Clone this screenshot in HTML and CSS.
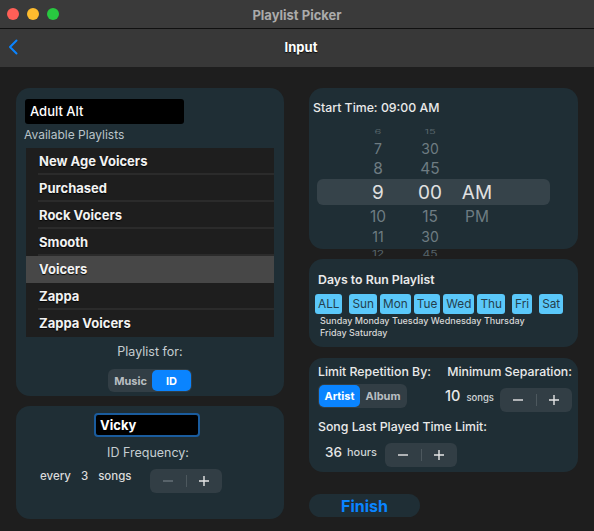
FILE: index.html
```html
<!DOCTYPE html>
<html>
<head>
<meta charset="utf-8">
<link rel="stylesheet" href="styles.css">
</head>
<body>
<div class="window">
  <header class="titlebar">
    <div class="lights">
      <span class="light red"></span><span class="light yellow"></span><span class="light green"></span>
    </div>
    <div class="win-title">Playlist Picker</div>
    <div></div>
  </header>
  <nav class="navbar">
    <svg class="back" width="12" height="16" viewBox="0 0 12 16"><path d="M8.5 1.5 L2 8 L8.5 14.5" fill="none" stroke="#0a84ff" stroke-width="2" stroke-linecap="round" stroke-linejoin="round"/></svg>
    <div class="nav-title">Input</div>
    <div></div>
  </nav>
  <main class="content">
    <div class="col">
      <section class="panel playlists">
        <div class="text-field">Adult Alt</div>
        <div class="muted-label">Available Playlists</div>
        <div class="list">
          <div class="list-row"><span>New Age Voicers</span></div>
          <div class="list-row"><span>Purchased</span></div>
          <div class="list-row"><span>Rock Voicers</span></div>
          <div class="list-row"><span>Smooth</span></div>
          <div class="list-row selected"><span>Voicers</span></div>
          <div class="list-row"><span>Zappa</span></div>
          <div class="list-row last"><span>Zappa Voicers</span></div>
        </div>
        <div class="center-label">Playlist for:</div>
        <div class="segmented seg-for">
          <span class="seg-item seg-music">Music</span>
          <span class="seg-item seg-id active">ID</span>
        </div>
      </section>
      <section class="panel id-panel">
        <div class="text-field focused">Vicky</div>
        <div class="center-label freq-label">ID Frequency:</div>
        <div class="freq-row">
          <span class="freq-text">every</span>
          <span class="freq-num">3</span>
          <span class="freq-text">songs</span>
          <div class="stepper freq-stepper">
            <span class="step-btn disabled"><svg width="12" height="12" viewBox="0 0 12 12"><path d="M1 6 H11" stroke="currentColor" stroke-width="1.4"/></svg></span>
            <span class="step-div"></span>
            <span class="step-btn"><svg width="12" height="12" viewBox="0 0 12 12"><path d="M1 6 H11 M6 1 V11" stroke="currentColor" stroke-width="1.4"/></svg></span>
          </div>
        </div>
      </section>
    </div>
    <div class="col">
      <section class="panel time-panel">
        <div class="panel-title time-title">Start Time: 09:00 AM</div>
        <div class="picker">
          <div class="p-row r-far"><span>6</span><span>15</span><span></span></div>
          <div class="p-row r-mid"><span>7</span><span>30</span><span></span></div>
          <div class="p-row r-near"><span>8</span><span>45</span><span></span></div>
          <div class="p-row r-sel"><span>9</span><span>00</span><span>AM</span></div>
          <div class="p-row r-near"><span>10</span><span>15</span><span>PM</span></div>
          <div class="p-row r-mid"><span>11</span><span>30</span><span></span></div>
          <div class="p-row r-end"><span>12</span><span>45</span><span></span></div>
        </div>
      </section>
      <section class="panel days-panel">
        <div class="panel-title days-title">Days to Run Playlist</div>
        <div class="day-buttons">
          <span class="day">ALL</span>
          <span class="day gap-l">Sun</span>
          <span class="day">Mon</span>
          <span class="day">Tue</span>
          <span class="day">Wed</span>
          <span class="day">Thu</span>
          <span class="day gap-l">Fri</span>
          <span class="day gap-l">Sat</span>
        </div>
        <div class="day-names">Sunday Monday Tuesday Wednesday Thursday<br>Friday Saturday</div>
      </section>
      <section class="panel limit-panel">
        <div class="limit-row head-row">
          <span class="panel-title">Limit Repetition By:</span>
          <span class="panel-title">Minimum Separation:</span>
        </div>
        <div class="limit-row ctrl-row">
          <div class="segmented seg-limit">
            <span class="seg-item seg-artist active">Artist</span>
            <span class="seg-item seg-album">Album</span>
          </div>
          <span class="num sep-num">10</span>
          <span class="unit">songs</span>
          <div class="stepper sep-stepper">
            <span class="step-btn"><svg width="12" height="12" viewBox="0 0 12 12"><path d="M1 6 H11" stroke="currentColor" stroke-width="1.4"/></svg></span>
            <span class="step-div"></span>
            <span class="step-btn"><svg width="12" height="12" viewBox="0 0 12 12"><path d="M1 6 H11 M6 1 V11" stroke="currentColor" stroke-width="1.4"/></svg></span>
          </div>
        </div>
        <div class="panel-title last-title">Song Last Played Time Limit:</div>
        <div class="limit-row hours-row">
          <span class="num">36</span>
          <span class="unit hours">hours</span>
          <div class="stepper">
            <span class="step-btn"><svg width="12" height="12" viewBox="0 0 12 12"><path d="M1 6 H11" stroke="currentColor" stroke-width="1.4"/></svg></span>
            <span class="step-div"></span>
            <span class="step-btn"><svg width="12" height="12" viewBox="0 0 12 12"><path d="M1 6 H11 M6 1 V11" stroke="currentColor" stroke-width="1.4"/></svg></span>
          </div>
        </div>
      </section>
      <button class="finish">Finish</button>
    </div>
  </main>
</div>
</body>
</html>
```
FILE: styles.css
```css
* { box-sizing: border-box; }
html, body {
  margin: 0;
  padding: 0;
}
body {
  width: 594px;
  height: 531px;
  overflow: hidden;
  background: #1e1e1e;
  font-family: Inter, "Noto Sans", sans-serif;
  color: #e8e8e8;
}
.window {
  width: 594px;
  height: 531px;
  background: #1e1e1e;
}
.titlebar {
  height: 29px;
  background: #3a3a3a;
  border-bottom: 1px solid #101010;
  display: grid;
  grid-template-columns: 1fr auto 1fr;
  align-items: center;
  padding: 0 7px;
}
.lights { display: flex; gap: 8px; }
.light { width: 12px; height: 12px; border-radius: 50%; }
.red { background: #ff5f57; }
.yellow { background: #febc2e; }
.green { background: #28c840; }
.win-title {
  font-size: 13px;
  font-weight: 700;
  color: #ababab;
  padding-top: 1px;
}
.navbar {
  height: 38px;
  background: #383838;
  display: grid;
  grid-template-columns: 1fr auto 1fr;
  align-items: center;
  padding: 0 0 2px 8px;
}
.back { display: block; }
.nav-title {
  font-size: 13px;
  font-weight: 700;
  color: #ffffff;
  text-shadow: 0 1px 1px rgba(0,0,0,0.8);
}
.content {
  display: flex;
  gap: 25px;
  padding: 21px 16px 0 16px;
}
.col {
  display: flex;
  flex-direction: column;
  gap: 10px;
}
.col:first-child { width: 268px; }
.col:last-child { width: 269px; }
.panel {
  background: #1f2e35;
  border-radius: 14px;
}
/* playlists panel */
.playlists {
  height: 308px;
  padding: 11px 10px 0 10px;
}
.text-field {
  width: 159px;
  height: 25px;
  background: #000;
  border-radius: 3px;
  font-size: 13px;
  font-weight: 500;
  line-height: 25px;
  padding-left: 5px;
  color: #fff;
  margin-left: -1px;
}
.muted-label {
  font-size: 12px;
  line-height: 16px;
  margin-top: 3px;
  margin-left: -2px;
  color: #bac4c9;
}
.list {
  margin-top: 5px;
  height: 189px;
  background: #1e1e1e;
}
.list-row {
  height: 27px;
  padding-left: 12px;
}
.list-row span {
  display: block;
  height: 27px;
  line-height: 26px;
  border-bottom: 2px solid #2b2b2b;
  font-size: 13px;
  font-weight: 700;
  color: #f2f2f2;
  padding-left: 1px;
  text-shadow: 0 1px 1px rgba(0,0,0,0.9);
}
.list-row.selected { background: #474747; }
.list-row.selected span, .list-row.last span { border-bottom-color: transparent; }
.center-label {
  text-align: center;
  font-size: 12.5px;
  line-height: 16px;
  margin-top: 7px;
  color: #c5cdd1;
}
.segmented {
  display: flex;
  background: #323e45;
  border-radius: 6px;
  padding: 1px;
  font-size: 11px;
  font-weight: 700;
}
.seg-item {
  display: flex;
  align-items: center;
  justify-content: center;
  border-radius: 5px;
  color: #b9bfc2;
}
.seg-item.active { background: #0a84ff; color: #fff; }
.seg-for {
  width: 84px;
  height: 23px;
  margin: 9px auto 0;
}
.seg-music { width: 43px; }
.seg-id { width: 39px; }
/* id panel */
.id-panel {
  height: 113px;
  padding-top: 7px;
}
.text-field.focused {
  width: 106px;
  height: 24px;
  margin: 0 auto;
  position: relative;
  left: -3px;
  border: 2px solid #1a5c9e;
  border-radius: 4px;
  line-height: 20px;
  padding-left: 4px;
  font-weight: 700;
}
.freq-label { margin-top: 8px; margin-right: 4px; }
.freq-row {
  display: flex;
  align-items: flex-start;
  padding: 0 62px 0 24px;
  margin-top: 8px;
  height: 24px;
}
.freq-text, .freq-num {
  font-size: 11.5px;
  font-weight: 500;
  color: #dadada;
  line-height: 14px;
}
.freq-num { margin: 0 10px 0 10px; }
.freq-stepper { margin-left: auto; }
.stepper {
  display: flex;
  align-items: center;
  width: 72px;
  height: 24px;
  background: #323e45;
  border-radius: 6px;
  flex: none;
}
.step-btn {
  flex: 1;
  display: flex;
  align-items: center;
  justify-content: center;
  color: #e6e6e6;
}
.step-btn.disabled { color: #69747a; }
.step-btn svg { display: block; }
.step-div {
  width: 1px;
  height: 12px;
  background: #4d585e;
}
/* time panel */
.time-panel {
  height: 161px;
  padding: 12px 0 0 4px;
}
.panel-title {
  font-size: 12.3px;
  font-weight: 500;
  line-height: 15px;
  color: #eaeaea;
}
.picker {
  margin-top: 9px;
  width: 233px;
  height: 132px;
  overflow: hidden;
  margin-left: 4px;
}
.p-row {
  display: grid;
  grid-template-columns: 60px 44px 50px;
  padding-left: 31px;
  align-items: center;
  text-align: center;
  color: #6e7c82;
}
.r-far { height: 15px; font-size: 11px; color: #56646a; }
.r-far span { display: block; transform: scaleY(0.55); }
.r-mid { height: 18px; font-size: 14px; }
.r-near { height: 22px; font-size: 15.5px; }
.r-sel {
  height: 26px;
  font-size: 19px;
  color: #e0e0e0;
  background: #36434a;
  border-radius: 6px;
}
.r-end { height: 16px; font-size: 12px; color: #56646a; }
.r-end span { display: block; transform: scaleY(0.7); }
/* days panel */
.days-panel {
  height: 88px;
  padding: 13px 0 0 6px;
}
.days-title { padding-left: 3px; font-weight: 600; }
.day-buttons {
  display: flex;
  gap: 3px;
  margin-top: 7px;
}
.day {
  height: 20px;
  padding: 0 3px;
  background: #5ac8fa;
  border-radius: 3px;
  font-size: 11.8px;
  line-height: 20px;
  color: #24404e;
}
.day.gap-l { margin-left: 4px; }
.day-names {
  margin-top: 1px;
  padding-left: 5px;
  font-size: 9px;
  font-weight: 500;
  line-height: 12px;
  color: #d6d6d6;
}
/* limit panel */
.limit-panel {
  height: 114px;
  padding: 6px 6px 0 9px;
  margin-top: 1px;
}
.limit-row { display: flex; align-items: flex-start; }
.head-row { justify-content: space-between; height: 15px; }
.ctrl-row { margin-top: 5px; height: 28px; }
.seg-limit { width: 89px; height: 24px; }
.seg-artist { width: 41px; }
.seg-album { flex: 1; }
.num {
  font-size: 13.5px;
  font-weight: 500;
  color: #e8e8e8;
  line-height: 16px;
}
.sep-num { margin-left: 38px; margin-top: 4px; font-size: 14.5px; }
.unit {
  font-size: 9.5px;
  font-weight: 500;
  color: #cfd4d6;
  margin-left: 6px;
  line-height: 16px;
  margin-top: 6px;
}
.sep-stepper { margin-left: auto; margin-top: 4px; }
.last-title { margin-top: 7px; }
.hours-row { margin-top: 9px; padding-left: 7px; height: 24px; }
.hours-row .num { margin-top: 1px; }
.unit.hours { font-size: 11px; margin-top: 1px; margin-right: 8px; margin-left: 5px; }
.finish {
  margin-top: 12px;
  width: 111px;
  height: 23px;
  border: none;
  border-radius: 12px;
  background: #1f2e35;
  color: #0a84ff;
  font-family: Inter, "Noto Sans", sans-serif;
  font-size: 16px;
  font-weight: 700;
  padding: 0;
}
```
